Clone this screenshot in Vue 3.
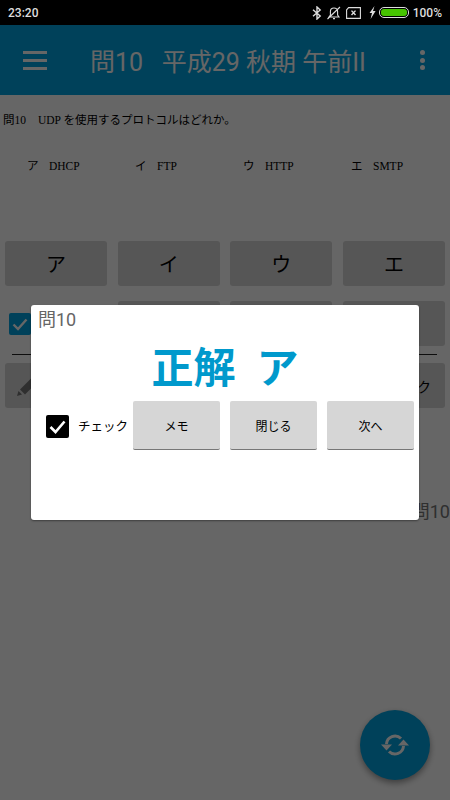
<template>
  <div class="screen">
    <div class="statusbar">
      <span class="clock">23:20</span>
      <div class="status-icons">
        <svg width="10" height="14" viewBox="0 0 10 14" class="st-icon">
          <path d="M1 3.8 L8.2 10 L5 13 V1 L8.2 4 L1 10.2" fill="none" stroke="#ddd" stroke-width="1.4" />
        </svg>
        <svg width="16" height="14" viewBox="0 0 16 14" class="st-icon">
          <path d="M3 11 H13 L11.6 9 V5.5 C11.6 3.4 10 2 8 2 C6 2 4.4 3.4 4.4 5.5 V9 Z M7 12.6 H9 M1.5 13 L14 1" fill="none" stroke="#ddd" stroke-width="1.1" />
        </svg>
        <svg width="15" height="12" viewBox="0 0 15 12" class="st-icon wide">
          <path d="M0.6 2.8 L2.6 0.6 H14.4 V11.4 H0.6 Z" fill="none" stroke="#ddd" stroke-width="1.1" />
          <path d="M5.5 3.6 L9.5 8 M9.5 3.6 L5.5 8" fill="none" stroke="#ddd" stroke-width="1.4" />
        </svg>
        <svg width="7" height="13" viewBox="0 0 7 13" class="st-icon bolt">
          <path d="M5.5 0 L0.5 7 H3 L1.6 13 L6.6 5 H4 Z" fill="#ddd" />
        </svg>
        <div class="battery"><div class="battery-fill"></div></div>
        <span class="percent">100%</span>
      </div>
    </div>

    <div class="app">
      <header class="toolbar">
        <div class="menu-icon"><i></i><i></i><i></i></div>
        <h1 class="title">問10&nbsp;&nbsp;&nbsp;平成29 秋期 午前II</h1>
        <div class="more-icon"><i></i><i></i><i></i></div>
      </header>

      <div class="content">
        <p class="question"><span class="q-no">問10</span>UDP を使用するプロトコルはどれか。</p>
        <div class="options">
          <span v-for="opt in options" :key="opt.kana" class="option">
            <span class="kana">{{ opt.kana }}</span>{{ opt.text }}
          </span>
        </div>

        <div class="btn-row answers">
          <div v-for="opt in options" :key="opt.kana" class="btn">{{ opt.kana }}</div>
        </div>

        <div class="btn-row second">
          <div class="check-cell">
            <div class="bg-check">
              <svg width="22" height="22" viewBox="0 0 22 22">
                <path d="M4.5 11.5 L9 16 L17.5 6.5" fill="none" stroke="#fff" stroke-width="2.4" />
              </svg>
            </div>
          </div>
          <div class="btn"></div>
          <div class="btn"></div>
          <div class="btn"></div>
        </div>

        <div class="divider"></div>

        <div class="btn-row third">
          <div class="btn pencil">
            <svg width="32" height="32" viewBox="0 0 32 32">
              <path d="M6 26 L7.5 21 L11 24.5 Z" fill="#777" />
              <path d="M9 19.5 L23 5.5 L28 10.5 L14 24.5 Z" fill="#777" />
            </svg>
          </div>
          <div class="btn"></div>
          <div class="btn"></div>
          <div class="btn last">ク</div>
        </div>

        <div class="behind-label">平成29 秋期 午前II&nbsp;&nbsp;問10</div>
      </div>

      <button class="fab" type="button">
        <svg width="30" height="30" viewBox="0 0 30 30">
          <path d="M6.5 14 A8.5 8.5 0 0 1 21 8.5" fill="none" stroke="#fff" stroke-width="3" />
          <path d="M23.5 16 A8.5 8.5 0 0 1 9 21.5" fill="none" stroke="#fff" stroke-width="3" />
          <path d="M1 14.5 H12 L6.5 20.5 Z" fill="#fff" />
          <path d="M29 15.5 H18 L23.5 9.5 Z" fill="#fff" />
        </svg>
      </button>

      <div class="overlay"></div>

      <div class="dialog">
        <div class="dialog-title">問10</div>
        <div class="result">正解&nbsp;&nbsp;ア</div>
        <div class="dialog-row">
          <label class="check-label">
            <span class="checkbox">
              <svg width="23" height="23" viewBox="0 0 23 23">
                <path d="M4.5 12 L9.5 17 L18.5 6.5" fill="none" stroke="#fff" stroke-width="2.6" />
              </svg>
            </span>
            <span class="check-text">チェック</span>
          </label>
          <div class="dlg-btn">メモ</div>
          <div class="dlg-btn">閉じる</div>
          <div class="dlg-btn">次へ</div>
        </div>
      </div>
    </div>
  </div>
</template>

<script setup>
const options = [
  { kana: 'ア', text: 'DHCP' },
  { kana: 'イ', text: 'FTP' },
  { kana: 'ウ', text: 'HTTP' },
  { kana: 'エ', text: 'SMTP' }
]
</script>

<style>
html, body {
  margin: 0;
  background: #666;
}
</style>

<style scoped>
.screen {
  width: 450px;
  height: 800px;
  overflow: hidden;
  display: flex;
  flex-direction: column;
  font-family: Roboto, "Noto Sans CJK JP", sans-serif;
}

.statusbar {
  height: 25px;
  flex-shrink: 0;
  background: #000;
  color: #ddd;
  display: flex;
  align-items: center;
  justify-content: space-between;
  padding: 0 8px;
  font-size: 12px;
  font-weight: 500;
}

.status-icons {
  display: flex;
  align-items: center;
}

.st-icon { margin-right: 4px; }
.wide { margin-right: 8px; }
.bolt { margin-right: 3px; }

.battery {
  width: 30px;
  height: 11px;
  border: 1px solid #ddd;
  border-radius: 5px;
  box-sizing: border-box;
  padding: 1px;
  margin-right: 4px;
}

.battery-fill {
  height: 100%;
  background: #46c400;
  border-radius: 3px;
}

.app {
  position: relative;
  flex: 1;
  background: #fff;
}

.toolbar {
  height: 70px;
  background: #00a2e0;
  display: flex;
  align-items: center;
  color: #fff;
}

.menu-icon {
  width: 24px;
  margin-left: 23px;
  display: flex;
  flex-direction: column;
  gap: 5px;
}

.menu-icon i {
  display: block;
  height: 3px;
  background: #fff;
}

.title {
  margin: 0 0 0 43px;
  flex: 1;
  font-size: 25px;
  font-weight: 400;
  white-space: nowrap;
}

.more-icon {
  display: flex;
  flex-direction: column;
  gap: 2.5px;
  margin-right: 25px;
}

.more-icon i {
  display: block;
  width: 5px;
  height: 5px;
  border-radius: 50%;
  background: #fff;
}

.content {
  position: relative;
  color: #000;
}

.question {
  margin: 0;
  padding: 17px 0 0 3px;
  height: 39px;
  box-sizing: border-box;
  font-family: "Liberation Serif", "Noto Sans CJK JP", serif;
  font-size: 11.5px;
  line-height: 16px;
}

.q-no {
  display: inline-block;
  width: 35px;
}

.options {
  display: grid;
  grid-template-columns: repeat(4, 108px);
  padding: 24px 0 0 27px;
  box-sizing: border-box;
  height: 107px;
  font-family: "Liberation Serif", "Noto Sans CJK JP", serif;
  font-size: 11.5px;
  line-height: 16px;
}

.kana {
  display: inline-block;
  width: 22px;
}

.btn-row {
  display: grid;
  grid-template-columns: repeat(4, 1fr);
  gap: 10.5px;
  padding: 0 5px;
}

.btn {
  height: 45px;
  background: #d6d6d6;
  border-radius: 3px;
  display: flex;
  align-items: center;
  justify-content: center;
  font-size: 20px;
  color: #000;
}

.second { margin-top: 15px; }

.check-cell {
  display: flex;
  align-items: center;
  padding: 1px 0 0 4px;
}

.bg-check {
  width: 22px;
  height: 22px;
  background: #00a2e0;
  border-radius: 2px;
}

.bg-check svg { display: block; }

.divider {
  height: 1px;
  background: #222;
  margin: 8px 13px 8px 12px;
}

.pencil {
  justify-content: flex-start;
  padding-left: 6px;
}

.last {
  justify-content: flex-end;
  padding-right: 14px;
  font-size: 14px;
}

.behind-label {
  position: absolute;
  right: 0;
  top: 402px;
  font-size: 18px;
  white-space: nowrap;
  color: #777;
}

.fab {
  position: absolute;
  left: 360px;
  top: 685px;
  width: 70px;
  height: 70px;
  padding: 0;
  border: 0;
  border-radius: 50%;
  background: #00a2e0;
  box-shadow: 0 3px 6px rgba(0, 0, 0, 0.4);
  display: flex;
  align-items: center;
  justify-content: center;
}

.overlay {
  position: absolute;
  inset: 0;
  background: rgba(0, 0, 0, 0.6);
}

.dialog {
  position: absolute;
  left: 31px;
  top: 280px;
  width: 388px;
  height: 215px;
  background: #fff;
  border-radius: 3px;
  box-shadow: 0 1px 2px rgba(0, 0, 0, 0.4);
}

.dialog-title {
  padding: 4px 0 0 7px;
  font-size: 18px;
  line-height: 22px;
  color: #666;
}

.result {
  text-align: center;
  margin-top: 13px;
  font-size: 42px;
  line-height: 50px;
  font-weight: 700;
  color: #0099cc;
}

.dialog-row {
  display: flex;
  align-items: center;
  margin-top: 7px;
  padding-left: 15px;
}

.check-label {
  display: flex;
  align-items: center;
  width: 87px;
  flex-shrink: 0;
}

.checkbox {
  width: 23px;
  height: 23px;
  background: #000;
  border-radius: 2px;
  margin: 1px 9px 0 0;
  flex-shrink: 0;
}

.checkbox svg { display: block; }

.check-text {
  font-size: 12.5px;
  white-space: nowrap;
  color: #000;
}

.dlg-btn {
  width: 87px;
  height: 49px;
  flex-shrink: 0;
  box-sizing: border-box;
  margin-right: 10px;
  background: #d6d6d6;
  border-bottom: 1px solid #777;
  border-radius: 2px;
  display: flex;
  align-items: center;
  justify-content: center;
  font-size: 12px;
  color: #000;
}

.dlg-btn:last-child { margin-right: 0; }
</style>
